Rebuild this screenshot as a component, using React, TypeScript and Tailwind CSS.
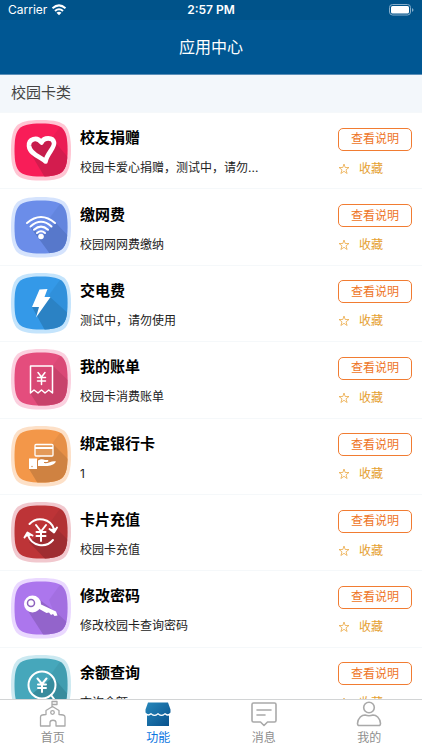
import { type ReactNode } from "react";

function Tile({ id, halo, base, shade, shadow, children }: {
  id: string; halo: string; base: string; shade: string; shadow: string; children: ReactNode;
}) {
  const body = "M30 3.500C42 3.500 48 5 51.500 8.500C55 12 56.500 18 56.500 30C56.500 42 55 48 51.500 51.500C48 55 42 56.500 30 56.500C18 56.500 12 55 8.500 51.500C5 48 3.500 42 3.500 30C3.500 18 5 12 8.500 8.500C12 5 18 3.500 30 3.500Z";
  return (
    <svg viewBox="0 0 60 61" className="h-[61px] w-[60px] shrink-0" aria-hidden="true">
      <clipPath id={id}><path d={body} /></clipPath>
      <path d="M30 0C44 0 50.500 2 54.500 6C58 10 60 17 60 30C60 43 58 50 54.500 54.500C50.500 58.500 44 60.500 30 60.500C16 60.500 9.500 58.500 5.500 54.500C2 50 0 43 0 30C0 17 2 10 5.500 6C9.500 2 16 0 30 0Z" fill={halo} />
      <path d={body} fill={base} />
      <g clipPath={`url(#${id})`}>
        <path d="M51 4L60 0V61H54L38 22Z" fill={shade} opacity="0.35" />
        <path d={shadow} fill={shade} />
      </g>
      {children}
    </svg>
  );
}

const white = { fill: "none", stroke: "#fff", strokeLinecap: "round", strokeLinejoin: "round" } as const;

const services = [
  {
    name: "校友捐赠", note: "校园卡爱心捐赠，测试中，请勿...",
    icon: (
      <Tile id="t1" halo="#ffc5d3" base="#f81d58" shade="#d31c4e" shadow="M17 29L36 61H60V41L44 22Z">
        <path d="M34.500 41.500C31 37 19 35 18 26C17.500 19 26 16 30.500 22.500C33 17 42 17 43 22.500C44 28 36 33 34.500 41.500Z" fill="#c71c4b" stroke="#fff" strokeWidth="4.600" strokeLinejoin="round" />
      </Tile>
    ),
  },
  {
    name: "缴网费", note: "校园网网费缴纳",
    icon: (
      <Tile id="t2" halo="#d5e3fd" base="#6b8de9" shade="#5778cb" shadow="M17 27L42 61H60V42L45 26L30 39Z">
        <g {...white} strokeWidth="2">
          <path d="M16 26Q30 14 44 26M19.500 29.500Q30 20 40.500 29.500M23 32.800Q30 26.500 37 32.800M26 36Q30 32.500 34 36" />
        </g>
        <circle cx="30" cy="39.500" r="2.800" fill="#fff" />
      </Tile>
    ),
  },
  {
    name: "交电费", note: "测试中，请勿使用",
    icon: (
      <Tile id="t3" halo="#c4e4fc" base="#3499e8" shade="#2b82c4" shadow="M21 34L36 61H60V43L39 24Z">
        <path d="M28.500 16.500L36.500 16L33.500 24H39.500L25 44.500L28 34H21Z" fill="#fff" />
      </Tile>
    ),
  },
  {
    name: "我的账单", note: "校园卡消费账单",
    icon: (
      <Tile id="t4" halo="#fbd0df" base="#e44d7d" shade="#c8426b" shadow="M19 44L30 61H60V34L42 17Z">
        <g {...white} strokeWidth="1.500">
          <path d="M19.500 44V17H41.500V44L37.800 41L34 44L30.500 41L27 44L23 41Z" fill="#d84774" />
          <path d="M27 23.500L30.500 28L34 23.500M26.500 28.500H34.500M26.500 32H34.500M30.500 28V35.500" />
        </g>
      </Tile>
    ),
  },
  {
    name: "绑定银行卡", note: "1",
    icon: (
      <Tile id="t5" halo="#fde0c7" base="#f39749" shade="#cf8241" shadow="M18 43L29 61H60V36L42 18Z">
        <rect x="24" y="18.500" width="18" height="11.500" rx="1" fill="#e49a59" stroke="#fff" strokeWidth="1.300" />
        <path d="M24 21H42V23H24ZM18 32.500H26V43H18ZM27 34.500C30 32.500 32 33 34 34H37C38 35 37 36 36 36H33V37C37 38 41 34 45 35.500C43 39 39 40 35 40H27Z" fill="#fff" />
        <circle cx="21" cy="40.500" r="0.700" fill="#d08444" />
      </Tile>
    ),
  },
  {
    name: "卡片充值", note: "校园卡充值",
    icon: (
      <Tile id="t6" halo="#f1c8ce" base="#bd3437" shade="#9f2d31" shadow="M18 40L38 61H60V41L43 24Z">
        <g {...white} strokeWidth="2">
          <path d="M18.500 22A14.500 14.500 0 0 1 43 27M42 38A14.500 14.500 0 0 1 17 33" />
          <path d="M25 23L30 29.500L35 23M25.500 30H34.500M25.500 34H34.500M30 30V39" />
          <path d="M38.500 27L43 30.500L46 25.500M13.500 35.500L16.500 30.500L21.500 33.500" />
        </g>
        <path d="M39 27L46 26L43 30.500ZM13.500 35L16.500 30.500L21 33.500Z" fill="#fff" />
      </Tile>
    ),
  },
  {
    name: "修改密码", note: "修改校园卡查询密码",
    icon: (
      <Tile id="t7" halo="#ead8ff" base="#ac76ed" shade="#9364cb" shadow="M15 30L35 61H60V48L46 35L29 22Z">
        <path d="M28 25.500L45 33.500L46.500 37.500L43.500 38L42 36L40 37L38 34.500L35.500 35L26.500 30Z" fill="#fff" />
        <circle cx="21.500" cy="26" r="8.500" fill="#fff" />
        <circle cx="20" cy="25" r="3.500" fill="#fff" stroke="#8d62bd" strokeWidth="1.500" />
      </Tile>
    ),
  },
  {
    name: "余额查询", note: "查询余额",
    icon: (
      <Tile id="t8" halo="#cce9f1" base="#46a7bb" shade="#388c9d" shadow="M21 39L39 61H60V43L42 22Z">
        <g {...white} strokeWidth="2">
          <circle cx="31" cy="30" r="13.500" />
          <path d="M40 40L43 44M26.500 23.500L31 29L35.500 23.500M27 29.500H35M27 33H35M31 29V37" />
        </g>
      </Tile>
    ),
  },
];

const line = { fill: "none", stroke: "#a9a9a9", strokeWidth: 1.6, strokeLinecap: "round", strokeLinejoin: "round" } as const;

const tabs = [
  {
    label: "首页",
    icon: (
      <g {...line} strokeWidth={1.3}>
        <path d="M13 7V1.500H18V4.500H13M1.500 26V17C1.500 15.500 3 14.500 7 14.500V10.500L13.500 6.500L20 10.500V14.500C24 14.500 26 15.500 26 17V26H17V22.500C17 19.500 11 19.500 11 22.500V26Z" />
        <circle cx="13.500" cy="12.500" r="1.800" />
      </g>
    ),
  },
  {
    label: "功能",
    active: true,
    icon: (
      <>
        <defs><linearGradient id="shop" x2="1" y2="1"><stop stopColor="#2888bb" /><stop offset="1" stopColor="#07508c" /></linearGradient></defs>
        <path d="M4 2.500H24L26.500 9.500V12.500Q24 15.500 21 13Q17.500 16.500 14 13Q10.500 16.500 7 13Q4 15.500 1.500 12.500V9.500ZM3 15.500Q6 16 7 14.500Q10.500 17.500 14 14.500Q17.500 17.500 21 14.500Q23 16.500 25 15.500V26H3Z" fill="url(#shop)" />
      </>
    ),
  },
  {
    label: "消息",
    icon: <path {...line} d="M3.500 3H24.500Q26 3 26 4.500V20.500Q26 22 24.500 22H17.500L14 25.500L10.500 22H3.500Q2 22 2 20.500V4.500Q2 3 3.500 3ZM7 10H21M7 15H15" />,
  },
  {
    label: "我的",
    icon: (
      <g {...line}>
        <circle cx="14" cy="7.500" r="5.300" />
        <path d="M3.500 25.500Q2.500 25 2.500 23.500C3 17.500 7 15 10 15Q14 16.500 18 15C21 15 25 17.500 25.500 23.500Q25.500 25 24.500 25.500Z" />
      </g>
    ),
  },
];

export default function App() {
  return (
    <div className="flex h-screen flex-col bg-white font-['Inter','Noto_Sans_CJK_SC',sans-serif] text-black">
      <header className="shrink-0 border-b border-[#5b8fb8] bg-[#005793] text-white">
        <div className="grid h-5 grid-cols-3 items-center bg-[#00538a] px-2 text-xs leading-5">
          <div className="flex items-center gap-1">
            <span>Carrier</span>
            <svg viewBox="0 0 16 12" className="h-3 w-4" aria-hidden="true">
              <path d="M1.500 4.200Q8-1.500 14.500 4.200M4 7Q8 3.500 12 7" fill="none" stroke="#fff" strokeWidth="2" />
              <path d="M5.500 8.700Q8 6.700 10.500 8.700L8 11.300Z" fill="#fff" />
            </svg>
          </div>
          <time className="text-center font-semibold">2:57 PM</time>
          <svg viewBox="0 0 25 12" className="h-3 w-[25px] justify-self-end" aria-hidden="true">
            <rect x="0.500" y="0.500" width="21" height="10.500" rx="3" fill="none" stroke="#86aecb" />
            <rect x="2" y="2" width="18" height="7.500" rx="1.500" fill="#fff" />
            <path d="M23 4V8Q24.500 7 24.500 6T23 4Z" fill="#86aecb" />
          </svg>
        </div>
        <h1 className="h-[54px] text-center text-base leading-[54px] font-normal">应用中心</h1>
      </header>

      <main className="min-h-0 flex-1 overflow-y-auto [scrollbar-width:none]">
        <h2 className="h-[37px] bg-[#f3f7fb] pl-[11px] text-[15px] leading-[35px] font-normal text-[#444]">校园卡类</h2>
        <ul className="grid min-h-[611px] auto-rows-fr">
          {services.map((s) => (
            <li key={s.name} className="flex items-center border-t border-[#f5f8fa] pr-[10px] pl-[11px]">
              {s.icon}
              <div className="ml-[9px] flex min-w-0 flex-1 flex-col gap-2 pt-[3px]">
                <h3 className="text-[15px] leading-6 font-bold">{s.name}</h3>
                <p className="truncate text-xs leading-5 text-[#222]">{s.note}</p>
              </div>
              <div className="flex w-[74px] flex-col gap-2 pt-[5px]">
                <button type="button" className="h-[23px] rounded-[5px] border border-[#f17c32] text-xs leading-5 text-[#ee7425]">查看说明</button>
                <button type="button" className="flex h-5 items-center gap-[9px] text-xs leading-5 text-[#e5a02f]">
                  <svg viewBox="0 0 12 12" className="size-3" aria-hidden="true">
                    <path d="M6 1L7.200 4.500H11L8 6.800L9.100 10.500L6 8.300L2.900 10.500L4 6.800L1 4.500H4.800Z" fill="none" stroke="#eba946" strokeWidth="0.800" />
                  </svg>
                  收藏
                </button>
              </div>
            </li>
          ))}
        </ul>
      </main>

      <nav className="grid h-[51px] shrink-0 grid-cols-4 border-t border-[#d2d4d5] bg-white">
        {tabs.map((t) => (
          <a key={t.label} href="#" aria-current={t.active ? "page" : undefined} className={`flex flex-col items-center text-xs leading-5 ${t.active ? "text-[#0a75df]" : "text-[#8e8e8e]"}`}>
            <svg viewBox="0 0 28 28" className="size-7" aria-hidden="true">{t.icon}</svg>
            {t.label}
          </a>
        ))}
      </nav>
    </div>
  );
}
